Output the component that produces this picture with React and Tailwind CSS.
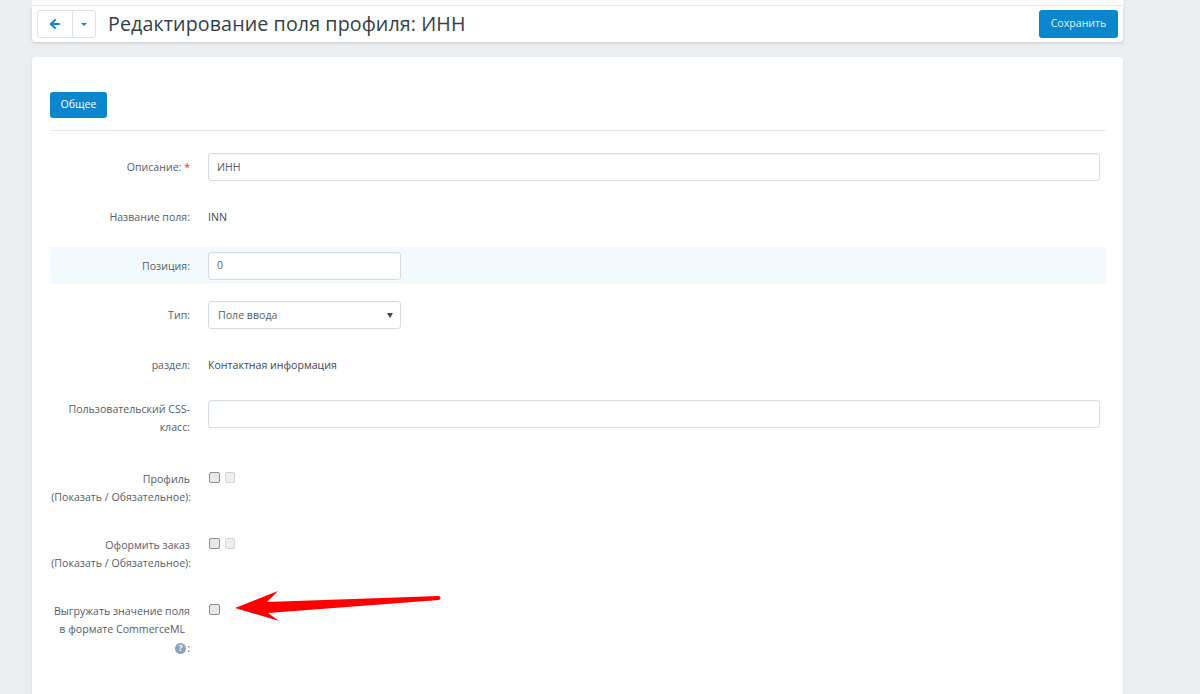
import { ArrowLeft } from 'lucide-react'

function Row({ label, className = '', children }) {
  return (
    <div className={`flex ${className}`}>
      <div className="w-[140px] shrink-0 whitespace-nowrap text-right text-[10.6px] leading-[18px] text-[#555d66]">{label}</div>
      <div className="ml-[18px] flex-1">{children}</div>
    </div>
  )
}

function Box({ className = '', children }) {
  return (
    <div className={`flex h-[28px] items-center rounded-[3px] border border-[#d5dde4] bg-white px-2 pt-px text-[10.6px] text-[#555d66] shadow-[inset_0_1px_1px_rgba(0,0,0,0.04)] ${className}`}>
      {children}
    </div>
  )
}

function Check({ disabled }) {
  return (
    <div className={`h-[10.5px] w-[10.5px] rounded-[2px] border ${disabled ? 'border-[#d4d4d4] bg-[#eeeeee]' : 'border-[#8e8e8e] bg-[#e8e8e8]'}`}></div>
  )
}

export default function App() {
  return (
    <div className="relative h-[694px] overflow-hidden bg-[#ebeef1] font-['Open_Sans',sans-serif]">
      <div className="ml-[32px] w-[1091px]">
        <div className="h-[5px] bg-white"></div>
        <div className="mt-px flex h-[36px] items-center justify-between rounded-b-[4px] bg-white pl-[5px] pr-[5px] shadow-[0_1px_3px_rgba(0,0,0,0.15)]">
          <div className="flex items-center">
            <div className="flex h-[28px] w-[59px] overflow-hidden rounded-[3px] border border-[#dde3e8] bg-white">
              <div className="flex w-[35px] items-center justify-center border-r border-[#dde3e8]">
                <ArrowLeft size={14} strokeWidth={3.4} className="text-[#0a86c9]" />
              </div>
              <div className="flex flex-1 items-center justify-center">
                <div className="h-0 w-0 border-x-[3.5px] border-t-[3.5px] border-x-transparent border-t-[#0a86c9]"></div>
              </div>
            </div>
            <h1 className="ml-[12px] text-[19.67px] leading-[26px] tracking-[0.1px] text-[#333e48]">Редактирование поля профиля: ИНН</h1>
          </div>
          <button className="block h-[28px] w-[79px] rounded-[3px] bg-[#0a86cd] text-[10.6px] text-[#e3f2fb]">Сохранить</button>
        </div>

        <div className="mt-[15px] h-[640px] rounded-[4px] bg-white pl-[18px] pr-[17px] pt-[35px] shadow-[0_1px_3px_rgba(0,0,0,0.08)]">
          <button className="block h-[26px] w-[57px] rounded-[3px] bg-[#0a86cd] text-[10.6px] text-white">Общее</button>
          <div className="mt-[12px] h-px bg-[#e3e8ee]"></div>

          <Row label={<>Описание:<span className="text-[#ee2a1e]"> *</span></>} className="mt-[22px] h-[28px] items-center">
            <Box className="w-[892px]">ИНН</Box>
          </Row>

          <Row label="Название поля:" className="mt-[27px]">
            <div className="text-[10.6px] leading-[18px] text-[#3c4650]">INN</div>
          </Row>

          <Row label="Позиция:" className="mt-[21px] h-[37px] items-center bg-[#f3fafd]">
            <Box className="w-[193px]">0</Box>
          </Row>

          <Row label="Тип:" className="mt-[17px] items-center">
            <Box className="w-[193px] justify-between pl-[9px] pr-[7px]">
              Поле ввода
              <span className="h-0 w-0 border-x-[3px] border-t-[5px] border-x-transparent border-t-[#444]"></span>
            </Box>
          </Row>

          <Row label="раздел:" className="mt-[27px]">
            <div className="text-[10.6px] leading-[18px] text-[#3c4650]">Контактная информация</div>
          </Row>

          <Row label={<>Пользовательский CSS-<br />класс:</>} className="mt-[26px]">
            <Box className="w-[892px]"></Box>
          </Row>

          <Row label={<>Профиль<br /><span className="-mr-px">(Показать / Обязательное):</span></>} className="mt-[34px]">
            <div className="flex gap-[5px] pl-px pt-[2px]"><Check /><Check disabled /></div>
          </Row>

          <Row label={<>Оформить заказ<br /><span className="-mr-px">(Показать / Обязательное):</span></>} className="mt-[30px]">
            <div className="flex gap-[5px] pl-px pt-[2px]"><Check /><Check disabled /></div>
          </Row>

          <Row label={<>Выгружать значение поля<br /><span className="pr-[5px]">в формате CommerceML</span><br /><span className="inline-flex items-center gap-px"><span className="inline-flex h-[11px] w-[11px] items-center justify-center rounded-full bg-[#8da3ba] text-[8px] font-bold text-white">?</span>:</span></>} className="mt-[30px]">
            <div className="pl-px pt-[2px]"><Check /></div>
          </Row>
        </div>
      </div>

      <svg className="absolute left-[230px] top-[588px]" width="216" height="40" viewBox="0 0 216 40">
        <path d="M5 20 L48 3 L37 14 L209 8 Q212 10 209 12 L38 25 L49 33 Z" fill="#ff0000" />
      </svg>
    </div>
  )
}
